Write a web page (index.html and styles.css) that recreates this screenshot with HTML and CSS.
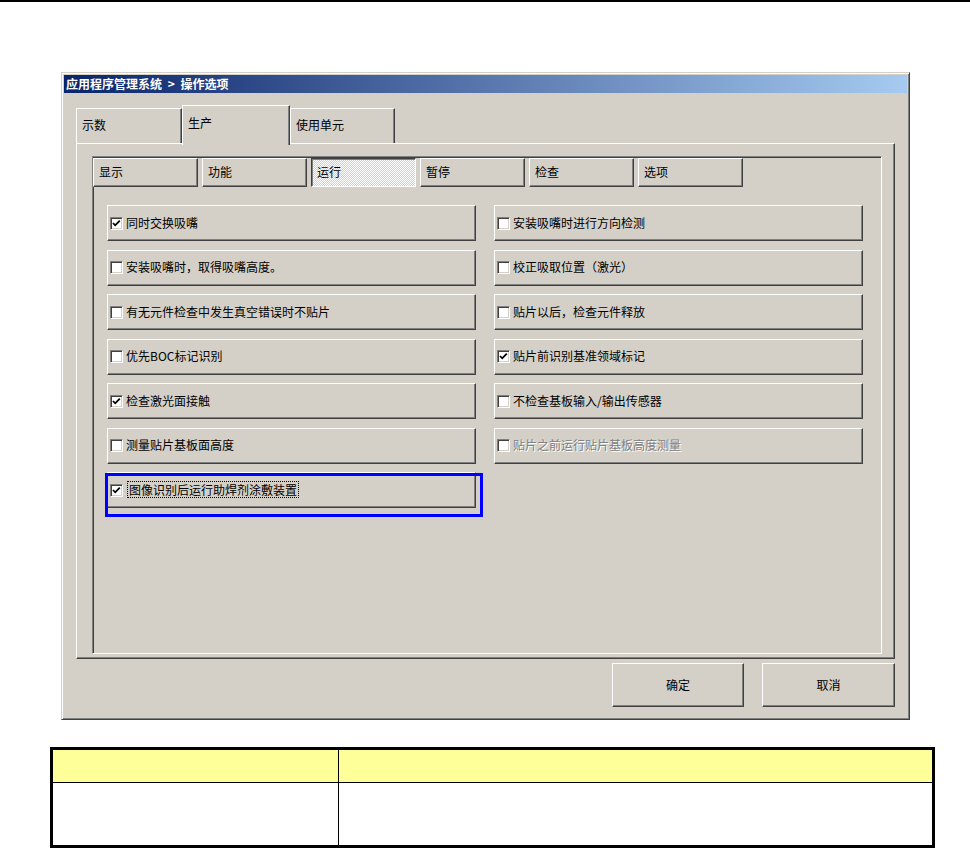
FILE: index.html
```html
<!DOCTYPE html>
<html lang="zh-CN">
<head>
<meta charset="utf-8">
<title>操作选项</title>
<link rel="stylesheet" href="styles.css">
</head>
<body>
<div class="topline"></div>
<div class="dialog">
  <div class="titlebar">应用程序管理系统 &gt; 操作选项</div>
  <div class="dlg-body">
    <div class="otabs">
      <div class="otab w106">示数</div>
      <div class="otab sel w108">生产</div>
      <div class="otab w105">使用单元</div>
    </div>
    <div class="opanel">
      <div class="iframe">
        <div class="itabs">
          <div class="itab">显示</div>
          <div class="itab">功能</div>
          <div class="itab sel">运行</div>
          <div class="itab">暂停</div>
          <div class="itab">检查</div>
          <div class="itab">选项</div>
        </div>
        <div class="rows">
          <div class="row"><span class="cb"><svg viewBox="0 0 9 9" width="9" height="9"><polyline points="1,4 3.2,6.3 7.8,1.6" class="tick"/></svg></span><span class="lbl">同时交换吸嘴</span></div>
          <div class="row"><span class="cb"></span><span class="lbl">安装吸嘴时进行方向检测</span></div>
          <div class="row"><span class="cb"></span><span class="lbl">安装吸嘴时，取得吸嘴高度。</span></div>
          <div class="row"><span class="cb"></span><span class="lbl">校正吸取位置（激光）</span></div>
          <div class="row"><span class="cb"></span><span class="lbl">有无元件检查中发生真空错误时不贴片</span></div>
          <div class="row"><span class="cb"></span><span class="lbl">贴片以后，检查元件释放</span></div>
          <div class="row"><span class="cb"></span><span class="lbl">优先BOC标记识别</span></div>
          <div class="row"><span class="cb"><svg viewBox="0 0 9 9" width="9" height="9"><polyline points="1,4 3.2,6.3 7.8,1.6" class="tick"/></svg></span><span class="lbl">贴片前识别基准领域标记</span></div>
          <div class="row"><span class="cb"><svg viewBox="0 0 9 9" width="9" height="9"><polyline points="1,4 3.2,6.3 7.8,1.6" class="tick"/></svg></span><span class="lbl">检查激光面接触</span></div>
          <div class="row"><span class="cb"></span><span class="lbl">不检查基板输入/输出传感器</span></div>
          <div class="row"><span class="cb"></span><span class="lbl">测量贴片基板面高度</span></div>
          <div class="row disabled"><span class="cb"></span><span class="lbl">贴片之前运行贴片基板高度测量</span></div>
          <div class="row hl"><span class="cb"><svg viewBox="0 0 9 9" width="9" height="9"><polyline points="1,4 3.2,6.3 7.8,1.6" class="tick"/></svg></span><span class="lbl focus">图像识别后运行助焊剂涂敷装置</span><span class="blue"></span></div>
        </div>
      </div>
    </div>
    <div class="buttons">
      <div class="btn w132">确定</div>
      <div class="btn w133">取消</div>
    </div>
  </div>
</div>
<div class="note">
  <div class="cell head"></div>
  <div class="cell head"></div>
  <div class="cell"></div>
  <div class="cell"></div>
</div>
</body>
</html>
```

FILE: styles.css
```css
* { box-sizing: border-box; }
html, body { margin: 0; padding: 0; background: #fff; }
body {
  width: 970px;
  height: 849px;
  overflow: hidden;
  font-family: "Noto Sans CJK SC", "Noto Sans", sans-serif;
  font-size: 12px;
  color: #000;
}
.topline { height: 2px; background: #000; }

.dialog {
  margin: 70px 0 0 61px;
  width: 849px;
  height: 648px;
  background: #d4d0c8;
  border: 1px solid;
  border-color: #d4d0c8 #404040 #404040 #d4d0c8;
  box-shadow: inset 1px 1px 0 #fff, inset -1px -1px 0 #808080;
  padding: 2px;
  display: flex;
  flex-direction: column;
}
.titlebar {
  height: 18px;
  line-height: 17px;
  padding-left: 2px;
  color: #fff;
  font-weight: bold;
  word-spacing: 3px;
  background: linear-gradient(to right, #0a246a, #a6caf0);
  white-space: nowrap;
}
.dlg-body {
  padding: 12px 12px 0 12px;
  display: flex;
  flex-direction: column;
}

.otabs {
  display: flex;
  align-items: flex-end;
  height: 38px;
}
.otab {
  height: 35px;
  padding: 8px 0 0 5px;
  line-height: 16px;
  border-top: 1px solid #fff;
  border-left: 1px solid #fff;
  border-right: 1px solid #404040;
  box-shadow: inset -1px 0 0 #808080;
  background: #d4d0c8;
}
.otab.sel {
  height: 40px;
  padding-top: 9px;
  margin-bottom: -2px;
  position: relative;
  z-index: 1;
}
.w105 { width: 105px; }
.w106 { width: 106px; }
.w108 { width: 108px; }

.opanel {
  width: 819px;
  height: 516px;
  border: 1px solid;
  border-color: #fff #404040 #404040 #fff;
  box-shadow: inset -1px -1px 0 #808080;
  padding: 12px 11px 0 15px;
}
.iframe {
  width: 790px;
  height: 498px;
  border: 1px solid;
  border-color: #808080 #fff #fff #808080;
  box-shadow: inset 1px 1px 0 #404040;
}
.itabs {
  display: flex;
  gap: 4px;
  margin-top: 1px;
  height: 29px;
}
.itab {
  width: 105px;
  height: 29px;
  line-height: 25px;
  padding-left: 5px;
  border: 1px solid;
  border-color: #fff #404040 #404040 #fff;
  box-shadow: inset -1px -1px 0 #808080;
}
.itab.sel {
  border-color: #404040 #fff #fff #404040;
  box-shadow: inset 1px 1px 0 #808080;
  background: repeating-conic-gradient(#fff 0 25%, #d4d0c8 0 50%) 0 0 / 2px 2px;
}

.rows {
  margin: 18px 0 0 14px;
  display: grid;
  grid-template-columns: 369px 369px;
  grid-auto-rows: 36px;
  column-gap: 18px;
  row-gap: 8.5px;
}
.row {
  position: relative;
  display: flex;
  align-items: center;
  padding: 0 0 2px 2px;
  border: 1px solid;
  border-color: #fff #404040 #404040 #fff;
  box-shadow: inset -1px -1px 0 #808080;
}
.cb {
  width: 13px;
  height: 13px;
  flex: none;
  padding: 1px;
  background: #fff;
  border: 1px solid;
  border-color: #808080 #fff #fff #808080;
  box-shadow: inset 1px 1px 0 #404040, inset -1px -1px 0 #d4d0c8;
  margin: 2px 3px 0 0;
}
.cb svg { display: block; }
.tick { fill: none; stroke: #000; stroke-width: 1.8; }
.lbl { line-height: 15px; white-space: nowrap; }
.lbl.focus {
  border: 1px dotted #000;
  padding: 0 1px;
  margin-left: 1px;
}
.disabled .lbl { color: #808080; text-shadow: 1px 1px 0 #fff; }
.blue {
  position: absolute;
  top: 0;
  left: -3px;
  width: 378px;
  height: 44px;
  border: 3px solid #0000ff;
}

.buttons {
  margin-top: 4px;
  display: flex;
  justify-content: flex-end;
  gap: 18px;
}
.btn {
  height: 44px;
  padding-bottom: 1px;
  display: flex;
  align-items: center;
  justify-content: center;
  border: 1px solid;
  border-color: #fff #404040 #404040 #fff;
  box-shadow: inset -1px -1px 0 #808080;
}
.w132 { width: 132px; }
.w133 { width: 133px; }

.note {
  margin: 27px 0 0 50px;
  width: 885px;
  border: 3px solid #000;
  background: #000;
  display: grid;
  grid-template-columns: 285px 1fr;
  grid-template-rows: 32px 62px;
  gap: 1px;
}
.cell { background: #fff; }
.cell.head { background: #ffff99; }
```
